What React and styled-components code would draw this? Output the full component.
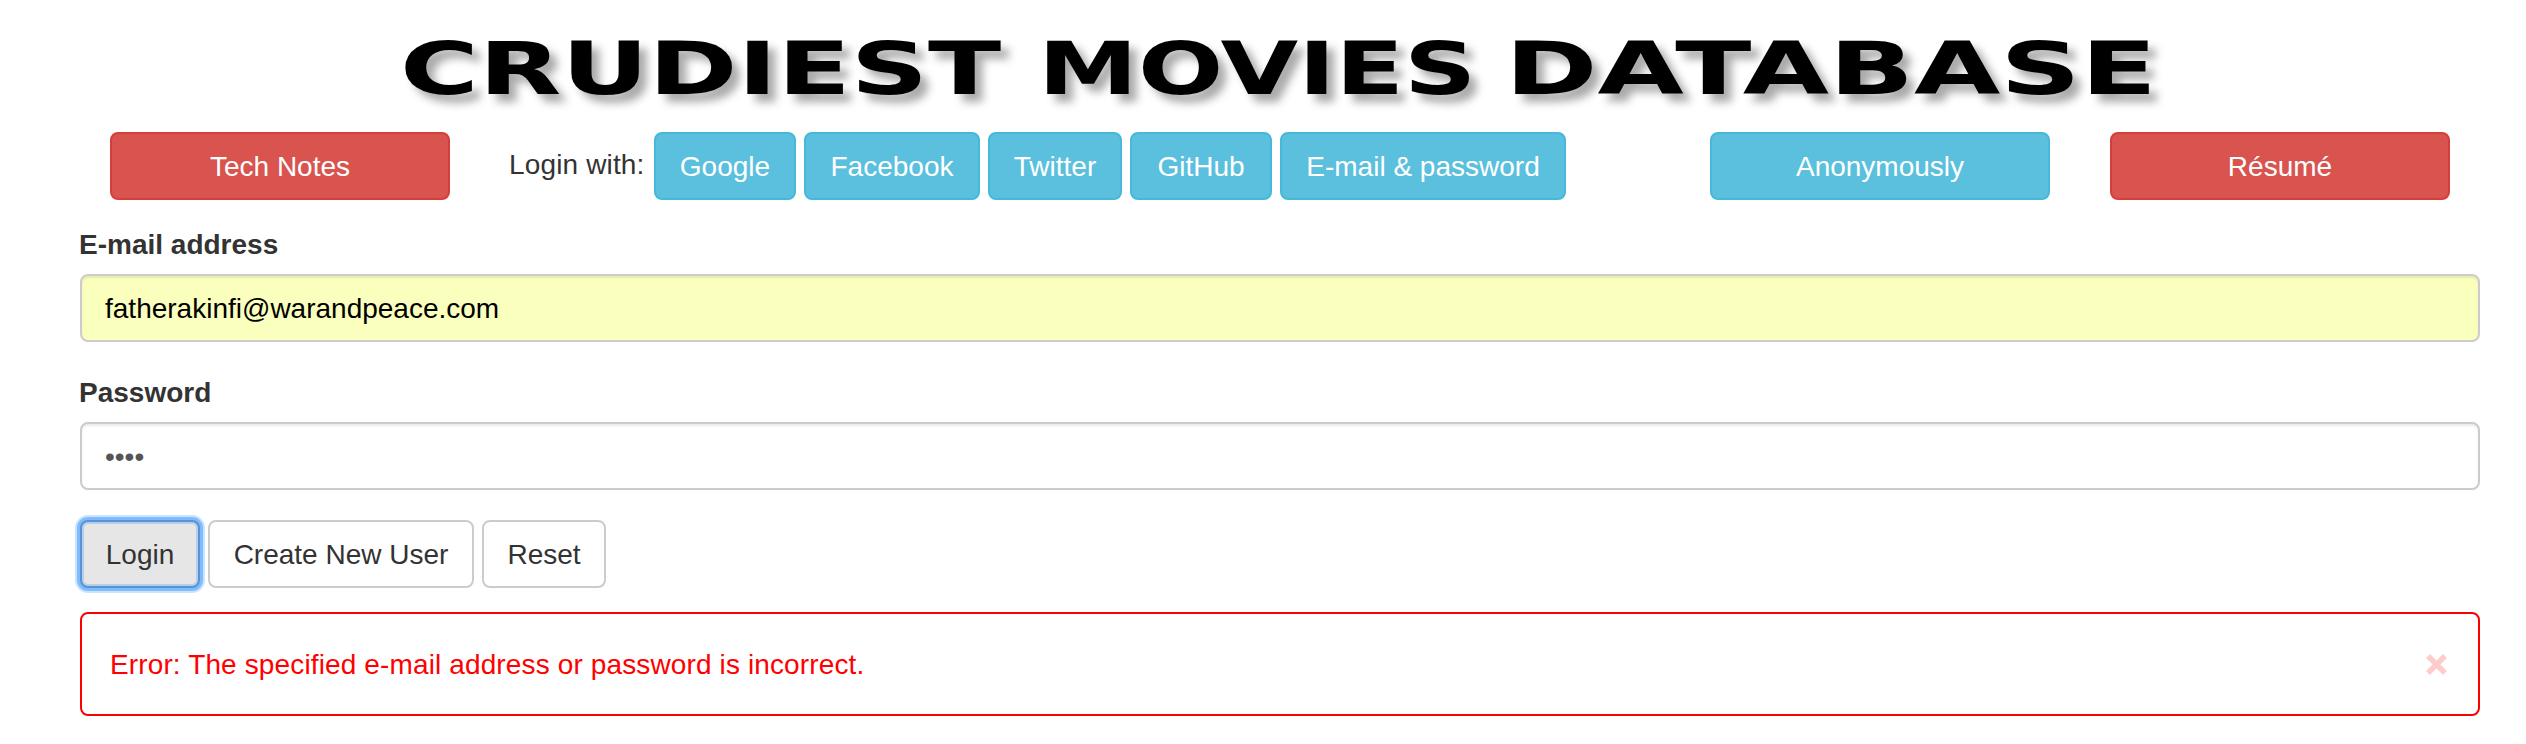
import React from "react";
import styled, { createGlobalStyle } from "styled-components";

const GlobalStyle = createGlobalStyle`
  *, *::before, *::after { box-sizing: border-box; }
  body {
    margin: 0;
    background: #fff;
    color: #333;
    font: 28px/40px "Liberation Sans", Arial, sans-serif;
  }
`;

const Page = styled.main`
  width: 2400px;
  margin-left: 80px;
  padding-top: 27px;
`;

const Title = styled.h1`
  display: flex;
  margin: 0 0 21px 320px;
  height: 84px;
  font: 700 73px/84px "DejaVu Sans", sans-serif;
  color: #000;
  filter: drop-shadow(8px 8px 4px #aaa);
`;

const TitleWord = styled.span`
  flex: none;
  width: ${(p) => p.$width}px;
  white-space: pre;
  transform: scaleX(${(p) => p.$stretch});
  transform-origin: 0 0;
`;

const Toolbar = styled.nav`
  display: flex;
  align-items: flex-start;
  padding-left: 30px;
`;

const Button = styled.button`
  flex: none;
  height: 68px;
  width: ${(p) => p.$width || 340}px;
  padding: 2px 0 0;
  border: 2px solid ${(p) => p.$border};
  border-radius: 8px;
  background: ${(p) => p.$fill};
  color: #fff;
  font: inherit;
  white-space: nowrap;
`;

const DangerButton = styled(Button).attrs({ $fill: "#d9534f", $border: "#d43f3a" })``;
const InfoButton = styled(Button).attrs({ $fill: "#5bc0de", $border: "#46b8da" })``;
const DefaultButton = styled(Button).attrs({ $fill: "#fff", $border: "#ccc" })`
  color: #333;
`;
const FocusedButton = styled(Button).attrs({ $fill: "#e6e6e6", $border: "#5a93d0" })`
  color: #333;
  box-shadow: 0 0 0 3px #7fbcfd, 0 0 0 5px #cbe3fe, inset 0 0 0 2px #b3cfec;
`;

const Providers = styled.div`
  display: flex;
  gap: 8px;
  width: 1142px;
  margin: 0 60px 0 58px;
`;

const ProvidersLabel = styled.span`
  width: 138px;
  padding: 13px 0 0 1px;
  letter-spacing: 0.15px;
  white-space: nowrap;
`;

const ResumeSlot = styled.div`
  margin-left: 60px;
`;

const Form = styled.form`
  padding-top: 25px;
`;

const Field = styled.div`
  margin-bottom: 30px;
`;

const Label = styled.label`
  display: block;
  margin: 0 0 9px -1px;
  font-weight: 700;

  ${Field} + ${Field} & {
    padding-top: 1px;
  }
`;

const Input = styled.div`
  height: 68px;
  padding: 1px 23px 0;
  border: 2px solid #ccc;
  border-radius: 8px;
  background: ${(p) => (p.$autofill ? "#faffbd" : "#fff")};
  color: ${(p) => (p.$autofill ? "#000" : "#555")};
  line-height: 64px;
  box-shadow: inset 0 2px 2px rgba(0, 0, 0, 0.075);
`;

const Actions = styled.div`
  display: flex;
  gap: 8px;
  margin-bottom: 24px;
`;

const Alert = styled.div`
  display: flex;
  align-items: center;
  justify-content: space-between;
  height: 104px;
  padding: 1px 31px 0 28px;
  border: 2px solid #f00;
  border-radius: 8px;
  color: #f00;
  letter-spacing: 0.13px;
`;

const CloseIcon = styled.svg`
  width: 21px;
  height: 21px;
`;

const providers = [
  ["Google", 142],
  ["Facebook", 176],
  ["Twitter", 134],
  ["GitHub", 142],
  ["E-mail & password", 286],
];

export default function App() {
  return (
    <>
      <GlobalStyle />
      <Page>
        <Title>
          <TitleWord $width={638} $stretch={1.47}>CRUDIEST</TitleWord>
          <TitleWord $width={467} $stretch={1.375}>MOVIES</TitleWord>
          <TitleWord $width={650} $stretch={1.528}>DATABASE</TitleWord>
        </Title>
        <Toolbar>
          <DangerButton>Tech Notes</DangerButton>
          <Providers>
            <ProvidersLabel>Login with:</ProvidersLabel>
            {providers.map(([name, width]) => (
              <InfoButton key={name} $width={width}>{name}</InfoButton>
            ))}
          </Providers>
          <InfoButton>Anonymously</InfoButton>
          <ResumeSlot>
            <DangerButton>Résumé</DangerButton>
          </ResumeSlot>
        </Toolbar>
        <Form>
          <Field>
            <Label>E-mail address</Label>
            <Input $autofill>fatherakinfi@warandpeace.com</Input>
          </Field>
          <Field>
            <Label>Password</Label>
            <Input>••••</Input>
          </Field>
          <Actions>
            <FocusedButton type="button" $width={120}>Login</FocusedButton>
            <DefaultButton type="button" $width={266}>Create New User</DefaultButton>
            <DefaultButton type="reset" $width={124}>Reset</DefaultButton>
          </Actions>
        </Form>
        <Alert>
          Error: The specified e-mail address or password is incorrect.
          <CloseIcon viewBox="0 0 21 21">
            <path d="M2 2 19 19M19 2 2 19" stroke="#fcc" strokeWidth="5.6" />
          </CloseIcon>
        </Alert>
      </Page>
    </>
  );
}
